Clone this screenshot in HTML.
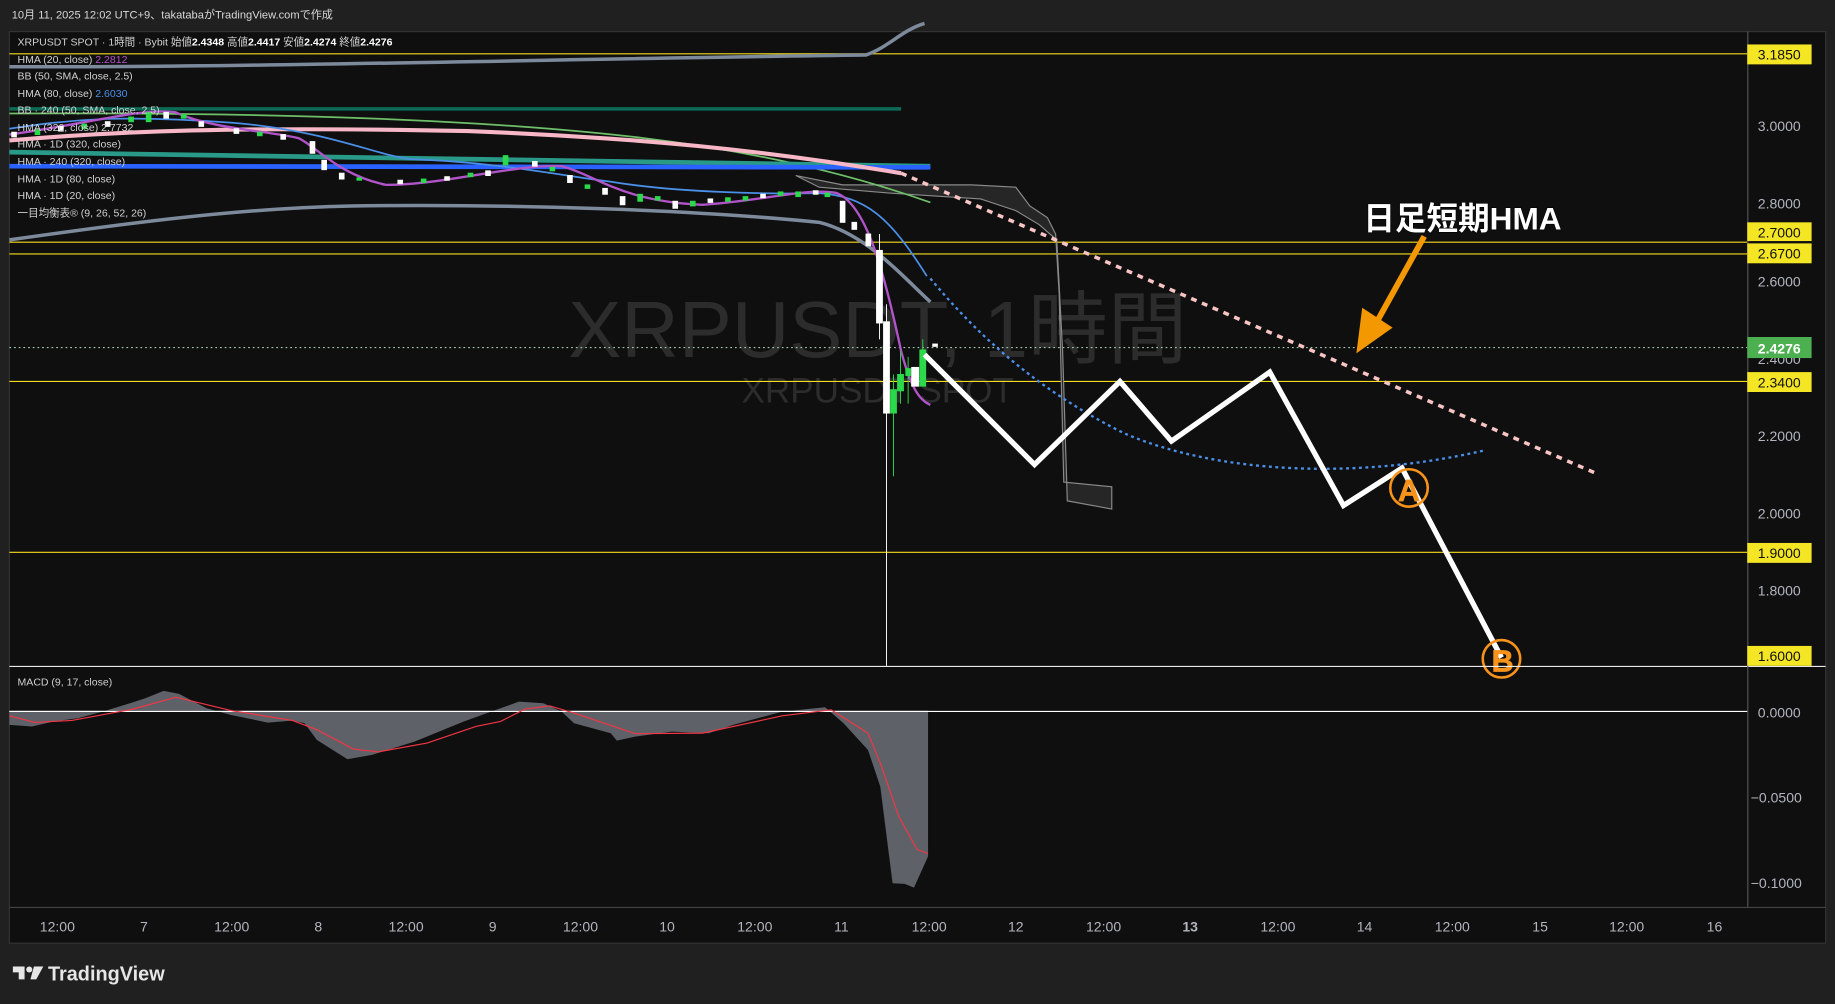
<!DOCTYPE html>
<html><head><meta charset="utf-8"><style>
html,body{margin:0;padding:0;background:#202020;overflow:hidden}
svg{display:block}
text{font-family:"Liberation Sans","Noto Sans CJK JP",sans-serif}
</style></head><body>
<svg width="1835" height="1004" viewBox="0 0 1568 858" preserveAspectRatio="none" xmlns="http://www.w3.org/2000/svg">
<rect width="1568" height="858" fill="#202020"/>
<text x="10" y="16" font-size="9.5" fill="#d8d8d8">10月 11, 2025 12:02 UTC+9、takatabaがTradingView.comで作成</text>
<rect x="8" y="27" width="1552" height="779" fill="#0f0f0f" stroke="#333" stroke-width="1"/>
<text x="750" y="305" font-size="68" fill="#2c2c2c" text-anchor="middle">XRPUSDT, 1時間</text>
<text x="750" y="344" font-size="30" fill="#2c2c2c" text-anchor="middle">XRPUSDT SPOT</text>
<g stroke="#f5dc1e" stroke-width="1">
<line x1="8" y1="46" x2="1493" y2="46"/><line x1="8" y1="207" x2="1493" y2="207"/>
<line x1="8" y1="217" x2="1493" y2="217"/><line x1="8" y1="326" x2="1493" y2="326"/>
<line x1="8" y1="472" x2="1493" y2="472"/></g>
<line x1="8" y1="297" x2="1493" y2="297" stroke="#9ec9a8" stroke-width="1" stroke-dasharray="1.5,2.5"/>
<path d="M680,150 L720,158 L830,158 L868,160 L880,176 L895,186 L902,200 L905,250 L909,412 L950,416 L950,435 L912,428 L908,300 L903,205 L888,192 L868,180 L838,170 L760,165 L700,160 Z" fill="#262626" stroke="#8a8a8a" stroke-width="1"/>
<path d="M8,57 C200,58 500,50 740,47 C760,40 770,26 790,20" fill="none" stroke="#7d8a9c" stroke-width="3"/>
<path d="M8,205 C100,192 200,178 300,176 C450,174 600,180 700,190 C740,200 770,235 795,258" fill="none" stroke="#7d8a9c" stroke-width="3"/>
<line x1="8" y1="93" x2="770" y2="93" stroke="#0d6b55" stroke-width="3"/>
<path d="M8,97 C200,96 400,100 550,118 C650,130 730,150 795,173" fill="none" stroke="#6fbf6a" stroke-width="1.5"/>
<path d="M8,130 L795,142" fill="none" stroke="#2a9a88" stroke-width="4"/>
<path d="M8,142 L795,143" fill="none" stroke="#2962ff" stroke-width="4"/>
<path d="M8,120 C100,112 200,108 400,112 C550,118 650,128 770,148" fill="none" stroke="#f8b7c7" stroke-width="3.5"/>
<line x1="770" y1="148" x2="1365" y2="405" stroke="#f8c4c4" stroke-width="3" stroke-dasharray="5,5"/>
<path d="M8,110 C60,102 100,98 200,105 C280,112 320,132 350,136 C420,138 480,150 520,155 C580,165 660,166 700,165 C740,168 760,185 792,236" fill="none" stroke="#4a8fe8" stroke-width="1.5"/>
<path d="M795,238 C830,280 880,330 960,370 C1040,405 1160,410 1268,385" fill="none" stroke="#4a8fe8" stroke-width="2" stroke-dasharray="2.5,3"/>
<path d="M8,115 C80,105 120,92 150,96 C180,110 230,112 255,118 C270,125 290,150 330,158 C380,158 440,140 480,142 C510,150 530,172 600,175 C650,172 690,160 715,165 C740,175 755,230 770,300 C778,330 785,342 795,346" fill="none" stroke="#b154c9" stroke-width="2"/>
<g fill="#fff" stroke="#fff" stroke-width="0.8">
<rect x="10" y="113" width="4" height="4"/><rect x="50" y="108" width="4" height="4"/><rect x="90" y="104" width="4" height="4"/><rect x="140" y="96" width="4" height="5"/><rect x="170" y="104" width="4" height="4"/><rect x="200" y="110" width="4" height="4"/><rect x="240" y="115" width="4" height="4"/><rect x="265" y="121" width="4" height="10"/><rect x="275" y="137" width="4" height="8"/><rect x="290" y="148" width="4" height="5"/><rect x="340" y="154" width="4" height="3"/><rect x="380" y="151" width="4" height="3"/><rect x="415" y="146" width="4" height="4"/><rect x="455" y="138" width="4" height="4"/><rect x="485" y="150" width="4" height="6"/><rect x="515" y="161" width="4" height="5"/><rect x="530" y="168" width="4" height="7"/><rect x="575" y="172" width="4" height="6"/><rect x="605" y="170" width="4" height="3"/><rect x="650" y="166" width="4" height="3"/><rect x="695" y="163" width="4" height="3"/><rect x="718" y="172" width="4" height="18"/><rect x="728" y="190" width="4" height="6"/><rect x="740" y="200" width="4" height="10"/>
<rect x="749" y="214" width="5" height="62"/><rect x="755" y="275" width="5" height="78"/><rect x="779" y="314" width="6" height="16"/><rect x="797" y="294" width="4" height="2"/>
</g>
<g stroke="#fff" stroke-width="0.8"><line x1="757.5" y1="260" x2="757.5" y2="569"/><line x1="751.5" y1="200" x2="751.5" y2="290"/></g>
<g fill="#2bd94a" stroke="#2bd94a" stroke-width="0.8">
<rect x="30" y="111" width="4" height="4"/><rect x="70" y="106" width="4" height="4"/><rect x="110" y="100" width="4" height="4"/><rect x="125" y="96" width="4" height="8"/><rect x="155" y="98" width="4" height="3"/><rect x="220" y="113" width="4" height="3"/><rect x="305" y="152" width="4" height="2"/><rect x="360" y="153" width="4" height="3"/><rect x="400" y="148" width="4" height="3"/><rect x="430" y="133" width="4" height="8"/><rect x="470" y="143" width="4" height="3"/><rect x="500" y="158" width="4" height="3"/><rect x="545" y="166" width="4" height="6"/><rect x="560" y="168" width="4" height="3"/><rect x="590" y="172" width="4" height="4"/><rect x="620" y="169" width="4" height="3"/><rect x="635" y="168" width="4" height="3"/><rect x="665" y="164" width="4" height="3"/><rect x="680" y="164" width="4" height="4"/><rect x="705" y="165" width="4" height="3"/>
<rect x="761" y="333" width="5" height="20"/><rect x="767" y="320" width="5" height="14"/><rect x="774" y="315" width="4" height="6"/><rect x="786" y="299" width="5" height="31"/>
</g>
<g stroke="#2bd94a" stroke-width="0.8"><line x1="763.5" y1="320" x2="763.5" y2="407"/><line x1="769.5" y1="300" x2="769.5" y2="345"/><line x1="776" y1="305" x2="776" y2="345"/><line x1="788.5" y1="290" x2="788.5" y2="300"/></g>
<polyline points="790,303 884,397 957,326 1001,377 1085,318 1148,432 1198,400 1283,562" fill="none" stroke="#fff" stroke-width="4.5" stroke-linejoin="miter"/>
<g fill="none" stroke="#f7931a" stroke-width="2.2"><circle cx="1204" cy="417" r="16"/><circle cx="1283" cy="563" r="16"/></g>
<text x="1204" y="428" font-size="26" font-weight="bold" fill="#f7931a" stroke="#f7931a" stroke-width="0.6" text-anchor="middle">A</text>
<text x="1284" y="574" font-size="26" font-weight="bold" fill="#f7931a" stroke="#f7931a" stroke-width="0.6" text-anchor="middle">B</text>
<text x="1165" y="196" font-size="27" font-weight="bold" fill="#fff" stroke="#000" stroke-width="1" paint-order="stroke">日足短期HMA</text>
<line x1="1217" y1="202" x2="1176" y2="276" stroke="#f39800" stroke-width="5"/>
<polygon points="1159,302 1164,263 1190,280" fill="#f39800"/>
<g font-size="9" fill="#d0d0d0">
<text x="15" y="39">XRPUSDT SPOT · 1時間 · Bybit  始値<tspan font-weight="bold" fill="#fff">2.4348</tspan>  高値<tspan font-weight="bold" fill="#fff">2.4417</tspan>  安値<tspan font-weight="bold" fill="#fff">2.4274</tspan>  終値<tspan font-weight="bold" fill="#fff">2.4276</tspan></text>
<text x="15" y="54">HMA (20, close)  <tspan fill="#b154c9">2.2812</tspan></text>
<text x="15" y="68">BB (50, SMA, close, 2.5)</text>
<text x="15" y="83">HMA (80, close)  <tspan fill="#4a8fe8">2.6030</tspan></text>
<text x="15" y="97">BB · 240 (50, SMA, close, 2.5)</text>
<text x="15" y="112">HMA (320, close)  2.7732</text>
<text x="15" y="126">HMA · 1D (320, close)</text>
<text x="15" y="141">HMA · 240 (320, close)</text>
<text x="15" y="156">HMA · 1D (80, close)</text>
<text x="15" y="170">HMA · 1D (20, close)</text>
<text x="15" y="185">一目均衡表® (9, 26, 52, 26)</text>
<text x="15" y="586">MACD (9, 17, close)</text>
</g>
<line x1="8" y1="569.5" x2="1560" y2="569.5" stroke="#e8e8e8" stroke-width="1"/>
<line x1="1493.5" y1="27" x2="1493.5" y2="775" stroke="#555" stroke-width="1"/>
<line x1="8" y1="775.5" x2="1560" y2="775.5" stroke="#444" stroke-width="1"/>
<line x1="8" y1="608" x2="1493" y2="608" stroke="#fff" stroke-width="1"/>
<path d="M8,608 L8,619.5 L27.4,620.9 L45.7,616.6 L66.6,613.8 L87.6,608.1 L111.1,601 L124.2,596.7 L139.9,590.4 L153,593 L176.5,605.3 L197.5,611 L228.9,617.5 L249.8,615.8 L260.3,618.1 L270.7,632.3 L296.9,648.8 L317.8,645.1 L354.5,633.7 L396.3,616.6 L427.7,605.3 L443.4,599.6 L464.3,601 L480,608.1 L490.5,618.1 L521.9,626.6 L527.1,632.9 L542.8,629.5 L574.2,625.2 L605.6,626.6 L626.5,619.5 L668.4,608.1 L705,604.4 L720.8,618.1 L741.7,640.9 L752.2,672.2 L762.7,754.8 L773.1,755.3 L781,758.5 L793,732 L793,608 Z" fill="#5f6168"/>
<line x1="8" y1="608" x2="793" y2="608" stroke="#fff" stroke-width="1"/>
<polyline points="8,611.7 30,617.4 61.4,615.7 113.7,606 150.3,595.8 197.5,607.2 249.8,615.7 270.7,623.6 302.1,640.1 323,642.6 364.9,635 406.7,620.8 427.7,616.5 448.6,606 469.6,603.2 490.5,609.4 542.8,627 600.4,626.5 668.4,611.7 710.3,606.6 741.7,626.5 752.2,652 767.9,697.5 783.6,725.9 793,729.5" fill="none" stroke="#f23645" stroke-width="1"/>
<g font-size="12" fill="#b2b5be">
<text x="1502" y="112">3.0000</text><text x="1502" y="178">2.8000</text><text x="1502" y="245">2.6000</text><text x="1502" y="311">2.4000</text><text x="1502" y="377">2.2000</text><text x="1502" y="443">2.0000</text><text x="1502" y="509">1.8000</text>
<text x="1502" y="613">0.0000</text><text x="1496" y="686">−0.0500</text><text x="1496" y="759">−0.1000</text>
</g>
<g font-size="12" fill="#111">
<rect x="1493" y="38" width="55" height="17" fill="#f5e625"/><text x="1502" y="51">3.1850</text>
<rect x="1493" y="190" width="55" height="16" fill="#f5e625"/><text x="1502" y="203">2.7000</text>
<rect x="1493" y="208" width="55" height="17" fill="#f5e625"/><text x="1502" y="221">2.6700</text>
<rect x="1493" y="318" width="55" height="17" fill="#f5e625"/><text x="1502" y="331">2.3400</text>
<rect x="1493" y="464" width="55" height="17" fill="#f5e625"/><text x="1502" y="477">1.9000</text>
<rect x="1493" y="552" width="55" height="17" fill="#f5e625"/><text x="1502" y="565">1.6000</text>
<rect x="1493" y="288" width="55" height="18" fill="#4caf50"/><text x="1502" y="302" fill="#fff" font-weight="bold">2.4276</text>
</g>
<g font-size="12" fill="#b2b5be" text-anchor="middle">
<text x="49" y="796">12:00</text><text x="123" y="796">7</text><text x="198" y="796">12:00</text><text x="272" y="796">8</text><text x="347" y="796">12:00</text><text x="421" y="796">9</text><text x="496" y="796">12:00</text><text x="570" y="796">10</text><text x="645" y="796">12:00</text><text x="719" y="796">11</text><text x="794" y="796">12:00</text><text x="868" y="796">12</text><text x="943" y="796">12:00</text><text x="1017" y="796" font-weight="bold">13</text><text x="1092" y="796">12:00</text><text x="1166" y="796">14</text><text x="1241" y="796">12:00</text><text x="1316" y="796">15</text><text x="1390" y="796">12:00</text><text x="1465" y="796">16</text>
</g>
<g fill="#e6e6e6">
<path d="M11,826 h10 v11 h-5 v-6 h-5 z"/><circle cx="25" cy="828.5" r="2.6"/><path d="M29,826 h8 l-6,11 h-5 z"/>
</g>
<text x="41" y="838" font-size="17" font-weight="bold" fill="#e6e6e6">TradingView</text>
</svg>
</body></html>
